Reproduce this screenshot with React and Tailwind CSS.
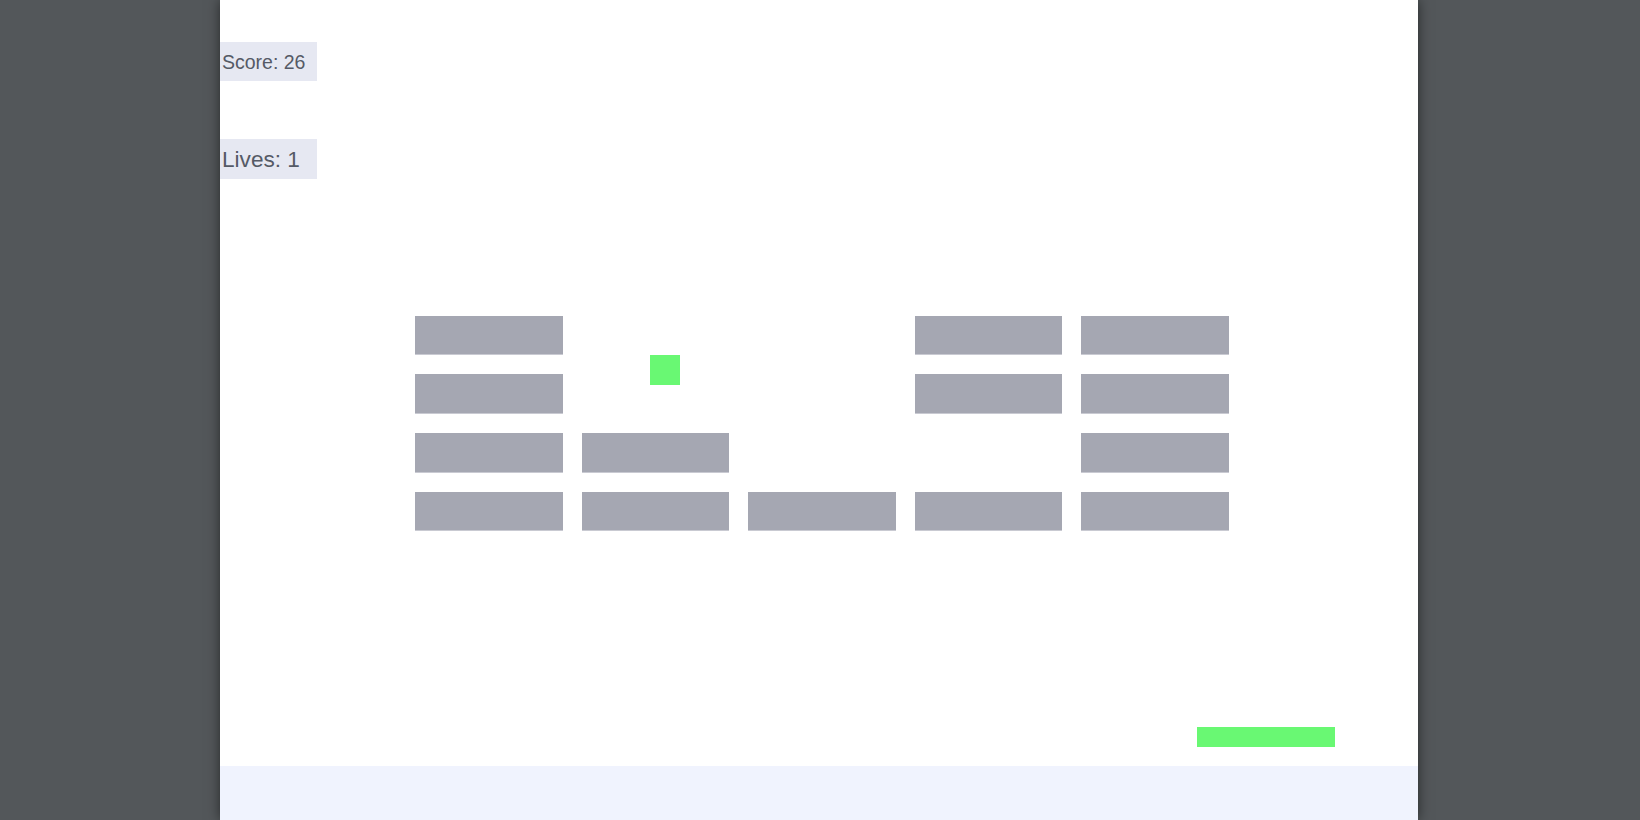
export default function App() {
  const rows = [
    [1, 0, 0, 1, 1],
    [1, 0, 0, 1, 1],
    [1, 1, 0, 0, 1],
    [1, 1, 1, 1, 1],
  ];
  return (
    <div className="w-full h-[820px] bg-[#53575a] overflow-hidden" style={{ fontFamily: '"Liberation Sans", Arial, sans-serif' }}>
      <div className="relative ml-[220px] w-[1198px] h-[820px] flex flex-col bg-white shadow-[0_0_12px_rgba(0,0,0,0.55)]">
        <div className="relative flex-1 flex flex-col">
          <div className="mt-[42px] w-[97px] h-[38.5px] bg-[#e6e8f2] text-[#555a66] text-[19.5px] flex items-center pl-[2px] pt-[3px] leading-none">
            Score: 26
          </div>
          <div className="mt-[58.5px] w-[97px] h-[40px] bg-[#e6e8f2] text-[#555a66] text-[22.6px] flex items-center pl-[2px] pt-[2px] leading-none">
            Lives: 1
          </div>
          <div className="mt-[136.7px] ml-[195px] grid grid-cols-[repeat(5,147.5px)] auto-rows-[39.3px] gap-x-[19px] gap-y-[19.5px]">
            {rows.flatMap((r, i) =>
              r.map((v, j) =>
                v ? (
                  <div key={`${i}-${j}`} className="bg-[#a5a7b2] border-b border-[#c9cad2]" />
                ) : (
                  <div key={`${i}-${j}`} />
                )
              )
            )}
          </div>
          <div className="absolute left-[430px] top-[355px] w-[30px] h-[30px] bg-[#69f873]" />
          <div className="absolute left-[977px] top-[727px] w-[138px] h-[20px] bg-[#69f873]" />
        </div>
        <div className="h-[54px] bg-[#f0f3fe]" />
      </div>
    </div>
  );
}
